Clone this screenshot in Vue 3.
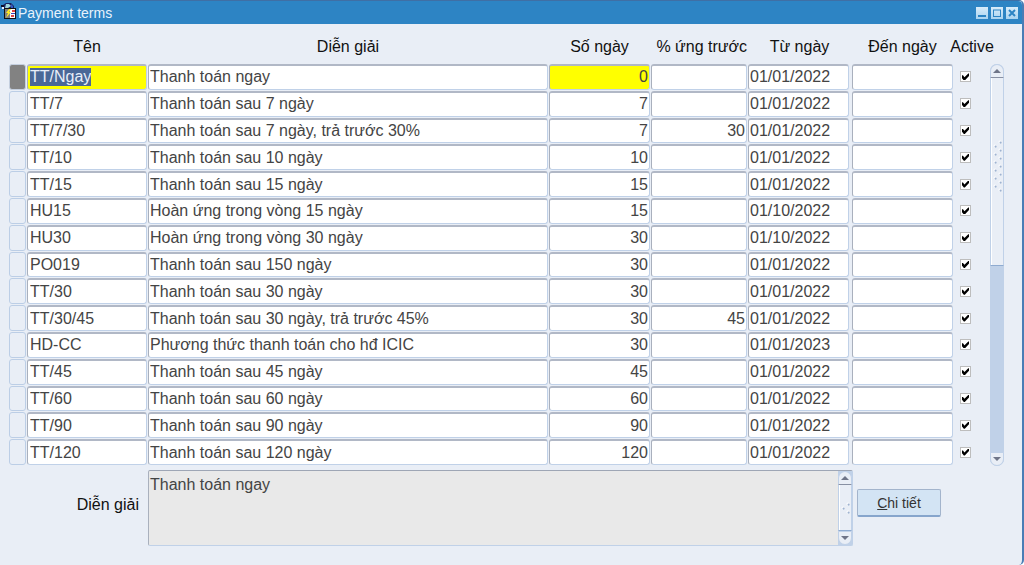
<script setup>
import { ref, onMounted } from 'vue'

const raw = [
  ['TT/Ngay', 'Thanh toán ngay', '0', '', '01/01/2022'],
  ['TT/7', 'Thanh toán sau 7 ngày', '7', '', '01/01/2022'],
  ['TT/7/30', 'Thanh toán sau 7 ngày, trả trước 30%', '7', '30', '01/01/2022'],
  ['TT/10', 'Thanh toán sau 10 ngày', '10', '', '01/01/2022'],
  ['TT/15', 'Thanh toán sau 15 ngày', '15', '', '01/01/2022'],
  ['HU15', 'Hoàn ứng trong vòng 15 ngày', '15', '', '01/10/2022'],
  ['HU30', 'Hoàn ứng trong vòng 30 ngày', '30', '', '01/10/2022'],
  ['PO019', 'Thanh toán sau 150 ngày', '30', '', '01/01/2022'],
  ['TT/30', 'Thanh toán sau 30 ngày', '30', '', '01/01/2022'],
  ['TT/30/45', 'Thanh toán sau 30 ngày, trả trước 45%', '30', '45', '01/01/2022'],
  ['HD-CC', 'Phương thức thanh toán cho hđ ICIC', '30', '', '01/01/2023'],
  ['TT/45', 'Thanh toán sau 45 ngày', '45', '', '01/01/2022'],
  ['TT/60', 'Thanh toán sau 60 ngày', '60', '', '01/01/2022'],
  ['TT/90', 'Thanh toán sau 90 ngày', '90', '', '01/01/2022'],
  ['TT/120', 'Thanh toán sau 120 ngày', '120', '', '01/01/2022'],
]
const rows = ref(raw.map(([name, desc, days, pct, from]) => ({ name, desc, days, pct, from, to: '', active: true })))
const columns = [
  { key: 'name', label: 'Tên' },
  { key: 'desc', label: 'Diễn giải' },
  { key: 'days', label: 'Số ngày', num: true },
  { key: 'pct', label: '% ứng trước', num: true },
  { key: 'from', label: 'Từ ngày' },
  { key: 'to', label: 'Đến ngày' },
]
const current = ref(0)
const table = ref(null)
const grips = Array.from({ length: 13 }, (_, i) => i)

onMounted(() => {
  const first = table.value.querySelector('input')
  first.focus()
  first.select()
})
</script>

<template>
  <main class="window">
    <header class="titlebar">
      <svg class="app-icon" width="16" height="18" viewBox="0 0 16 18" aria-hidden="true">
        <path d="M2 3l3-2h5l3 3v4H4L2 7z" fill="#18225f" />
        <path d="M5 2h3l2 2-3 2H4z" fill="#9fd6dc" />
        <path d="M10 2l2 2v2h-2z" fill="#3558c0" />
        <path d="M0 3h3v2H0z" fill="#0c0f2a" />
        <path d="M1 5h2v2H1z" fill="#e9f2ff" />
        <rect x="3" y="6" width="12" height="11" fill="#111" />
        <rect x="4" y="7" width="5" height="9" fill="#85827b" />
        <rect x="9" y="7" width="5" height="9" fill="#fff" />
        <path d="M8 7L5 11h2l-2 5 5-6H8l2-3z" fill="#ffec20" />
        <path d="M11 9h3M10 14h3" stroke="#e04343" stroke-width="2" />
        <path d="M10 11.5h4" stroke="#3a46b8" />
      </svg>
      <h1>Payment terms</h1>
      <div class="controls">
        <button type="button" aria-label="Minimize">
          <svg width="12" height="12" viewBox="0 0 12 12"><path d="M2 9h8" stroke="#2d84c4" stroke-width="2" /></svg>
        </button>
        <button type="button" aria-label="Maximize">
          <svg width="12" height="12" viewBox="0 0 12 12"><path d="M2 3h8M2 9.5h8M2.5 3v7M9.5 3v7" fill="none" stroke="#2d84c4" /></svg>
        </button>
        <button type="button" aria-label="Close">
          <svg width="12" height="12" viewBox="0 0 12 12"><path d="M3 3l6 6M9 3l-6 6" stroke="#2d84c4" stroke-width="2" /></svg>
        </button>
      </div>
    </header>

    <section class="records">
      <table ref="table">
        <thead>
          <tr>
            <td></td>
            <th v-for="c in columns" :key="c.key" scope="col" :class="c.key">{{ c.label }}</th>
            <th scope="col">Active</th>
          </tr>
        </thead>
        <tbody>
          <tr v-for="(row, i) in rows" :key="row.name" :class="{ current: i === current }">
            <td class="marker"></td>
            <td v-for="c in columns" :key="c.key" :class="c.key">
              <input
                v-model="row[c.key]"
                type="text"
                :class="{ num: c.num }"
                :aria-label="c.label"
                spellcheck="false"
                @focus="current = i"
              />
            </td>
            <td class="active"><input v-model="row.active" type="checkbox" aria-label="Active" /></td>
          </tr>
        </tbody>
      </table>
      <div class="scroll">
        <button type="button" class="up" aria-label="Scroll up">
          <svg width="8" height="4" viewBox="0 0 8 4"><path d="M0 4L4 0l4 4z" fill="#6f7588" /></svg>
        </button>
        <div class="thumb">
          <svg width="10" height="52" viewBox="0 0 10 52" aria-hidden="true">
            <g v-for="g in grips" :key="g">
              <circle :cx="g % 2 ? 3 : 8" :cy="2 + g * 4" r="1.5" fill="#fff" />
              <circle :cx="g % 2 ? 3.6 : 8.6" :cy="2.6 + g * 4" r="1.1" fill="#9fb3d1" />
            </g>
          </svg>
        </div>
        <div class="track"></div>
        <button type="button" class="down" aria-label="Scroll down">
          <svg width="8" height="4" viewBox="0 0 8 4"><path d="M0 0l4 4 4-4z" fill="#6f7588" /></svg>
        </button>
      </div>
    </section>

    <section class="detail">
      <label for="description">Diễn giải</label>
      <div class="memo">
        <textarea id="description" :value="rows[current].desc" readonly></textarea>
        <div class="scroll small">
          <button type="button" class="up" aria-label="Scroll description up">
            <svg width="8" height="4" viewBox="0 0 8 4"><path d="M0 4L4 0l4 4z" fill="#6f7588" /></svg>
          </button>
          <div class="thumb">
            <svg width="10" height="12" viewBox="0 0 10 12" aria-hidden="true">
              <g fill="#fff"><circle cx="8" cy="2" r="1.5" /><circle cx="3" cy="6" r="1.5" /><circle cx="8" cy="10" r="1.5" /></g>
              <g fill="#9fb3d1"><circle cx="8.6" cy="2.6" r="1.1" /><circle cx="3.6" cy="6.6" r="1.1" /><circle cx="8.6" cy="10.6" r="1.1" /></g>
            </svg>
          </div>
          <button type="button" class="down" aria-label="Scroll description down">
            <svg width="8" height="4" viewBox="0 0 8 4"><path d="M0 0l4 4 4-4z" fill="#6f7588" /></svg>
          </button>
        </div>
      </div>
      <button type="button" class="open"><span><u>C</u>hi tiết</span></button>
    </section>
  </main>
</template>

<style>
body {
  margin: 0;
  background: #fff;
}
</style>

<style scoped>
.window,
.window * {
  box-sizing: border-box;
}
.window {
  display: flex;
  flex-direction: column;
  min-height: 100vh;
  background: #e9eef6;
  border-top: 1px solid #3f6fa5;
  border-right: 2px solid #4a7db5;
  border-radius: 0 5px 5px 0;
  font: 16px/20px "Liberation Sans", Arial, sans-serif;
  color: #111;
}
button,
input,
textarea {
  margin: 0;
  font: inherit;
}
button {
  display: flex;
  align-items: center;
  justify-content: center;
  padding: 0;
}
.titlebar {
  display: flex;
  align-items: center;
  height: 23px;
  padding: 0 4px 0 1px;
  background: #2d84c4;
  border-radius: 0 4px 0 0;
}
.app-icon {
  align-self: flex-start;
  margin-top: 1px;
}
h1 {
  flex: 1;
  margin: 0 0 0 1px;
  font-size: 14px;
  font-weight: 400;
  color: #e8f3fc;
}
.controls {
  display: flex;
  gap: 3px;
}
.controls button {
  width: 12px;
  height: 12px;
  background: linear-gradient(#d8ecfa, #a9d3f0);
  border: 0;
}
.records {
  flex: 1;
  display: flex;
  padding: 0 18px 0 9px;
}
table {
  flex: 1;
  display: flex;
  flex-direction: column;
}
tr {
  display: grid;
  grid-template-columns: 17px 120px minmax(0, 1fr) 101px 96px 103px 101px 36px;
  column-gap: 1px;
}
thead tr {
  height: 40px;
}
th,
td {
  display: flex;
  padding: 0;
}
th {
  justify-content: center;
  padding-top: 13px;
  font-weight: 400;
  white-space: nowrap;
}
th.pct {
  justify-content: flex-end;
}
tbody {
  flex: 1;
  display: grid;
  grid-auto-rows: 1fr;
}
tbody td {
  padding-bottom: 1px;
}
td input[type="text"] {
  width: 100%;
  height: 100%;
  min-width: 0;
  padding: 0 1px;
  background: #fff;
  border: 1px solid #c0d1e8;
  border-top: 2px solid #b1b8c6;
  border-left-color: #a9b0bd;
  border-radius: 3px;
  outline: 0;
  line-height: 22px;
  color: #444;
}
td input.num {
  text-align: right;
}
td.name input[type="text"] {
  padding-left: 2px;
}
td.from {
  padding-right: 2px;
}
input::selection {
  background: #4a6897;
  color: #e8eef8;
}
.current .name input[type="text"],
.current .days input[type="text"] {
  background: #ff0;
}
.marker::before {
  content: "";
  width: 15px;
  border: 1px solid #bccee6;
  border-radius: 3px;
}
.current .marker::before {
  background: #828282;
  border-color: #c4cfdf;
}
.active {
  align-items: center;
  padding-left: 6px;
}
.active input {
  appearance: none;
  width: 11px;
  height: 11px;
  border: 1px solid #bdbdbd;
  background: #fff;
  display: grid;
  place-items: center;
}
.active input:checked::before {
  content: "";
  width: 7px;
  height: 7px;
  background: #000;
  clip-path: polygon(0 28%, 14% 28%, 35% 55%, 90% 0, 100% 0, 100% 36%, 40% 100%, 26% 100%, 0 68%);
}
.scroll {
  display: flex;
  flex-direction: column;
  width: 14px;
  margin-top: 40px;
  background: #c0d1e8;
  border-radius: 7px;
}
.scroll button {
  width: 100%;
  height: 14px;
  background: #e9eef6;
  border: 1px solid #c0d1e8;
}
.scroll .up {
  border-radius: 7px 7px 0 0;
  border-bottom: 1px solid #8890a3;
}
.scroll .down {
  border-radius: 0 0 7px 7px;
}
.thumb {
  flex: 1;
  display: grid;
  place-items: center;
  background: #e9eef6;
  border: 1px solid #c0d1e8;
  border-top: 0;
  border-bottom-color: #8fabd0;
  box-shadow: inset 1px 0 #fff;
}
.scroll:not(.small) .thumb svg {
  margin-bottom: 10px;
}
.track {
  flex: 1;
}
.detail {
  display: flex;
  align-items: flex-start;
  padding: 4px 81px 19px 9px;
}
.detail label {
  width: 139px;
  padding: 25px 9px 0 0;
  text-align: right;
}
.memo {
  flex: 1;
  display: flex;
  height: 76px;
  background: #e9e9e9;
  border: 1px solid #c0d1e8;
  border-top-color: #9ea6b5;
  border-left-color: #a9b0bd;
  border-radius: 2px;
}
textarea {
  flex: 1;
  min-width: 0;
  padding: 4px 1px;
  background: none;
  border: 0;
  outline: 0;
  resize: none;
  color: #444;
}
.small {
  margin: 0;
  border-radius: 0;
}
.open {
  width: 84px;
  height: 28px;
  margin: 19px 0 0 4px;
  background: #d3e4f4;
  border: 1px solid #a3b4cc;
  border-bottom: 2px solid #86a5cc;
  border-radius: 2px;
  font-size: 14px;
  color: #333;
}
</style>
